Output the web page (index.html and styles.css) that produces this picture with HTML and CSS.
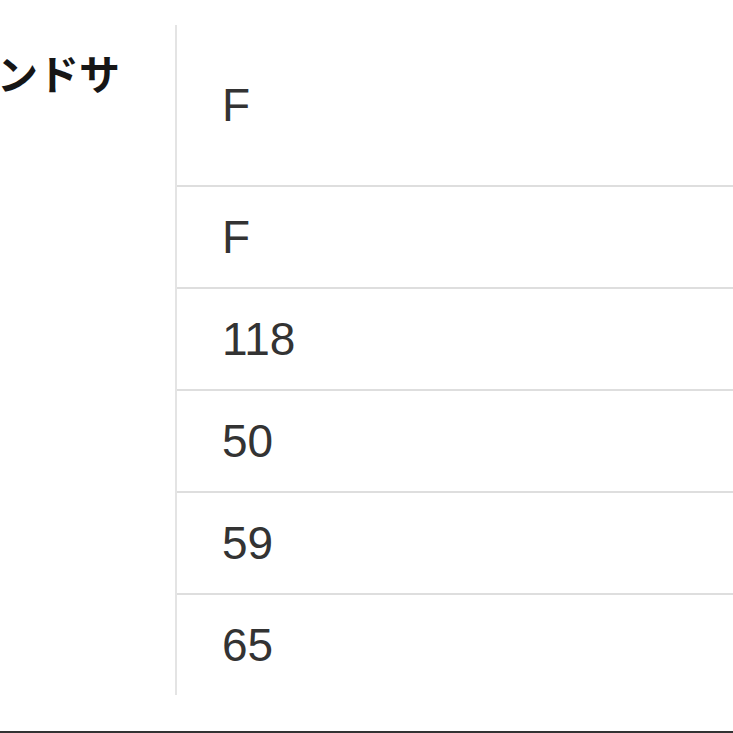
FILE: index.html
```html
<!DOCTYPE html>
<html lang="ja">
<head>
<meta charset="utf-8">
<link rel="stylesheet" href="styles.css">
</head>
<body>
<div class="page">
  <div class="table">
    <div class="head"><span class="head-text">ンドサ</span></div>
    <div class="values">
      <div class="cell first">F</div>
      <div class="cell">F</div>
      <div class="cell">118</div>
      <div class="cell">50</div>
      <div class="cell">59</div>
      <div class="cell last">65</div>
    </div>
  </div>
  <div class="bottom-rule"></div>
</div>
</body>
</html>
```

FILE: styles.css
```css
html, body {
  margin: 0;
  padding: 0;
  background: #ffffff;
}

.page {
  width: 733px;
  height: 733px;
  overflow: hidden;
  display: flex;
  flex-direction: column;
}

.table {
  display: flex;
  margin-top: 25px;
  height: 670px;
}

.head {
  width: 175px;
  flex: none;
  overflow: hidden;
  padding-top: 27px;
  box-sizing: border-box;
}

.head-text {
  display: block;
  margin-left: -3px;
  font-family: "Noto Sans CJK JP", sans-serif;
  font-weight: 700;
  font-size: 41px;
  line-height: 41px;
  color: #161616;
  white-space: nowrap;
}

.values {
  flex: 1;
  border-left: 2px solid #e4e4e4;
  display: flex;
  flex-direction: column;
}

.cell {
  height: 100px;
  display: flex;
  align-items: center;
  padding-left: 45px;
  border-bottom: 2px solid #dedede;
  font-family: "Liberation Sans", Arial, sans-serif;
  font-size: 46px;
  color: #333333;
}

.cell.first {
  height: 160px;
}

.cell.last {
  border-bottom: none;
}

.bottom-rule {
  margin-top: auto;
  height: 2px;
  background: #333333;
}
```
